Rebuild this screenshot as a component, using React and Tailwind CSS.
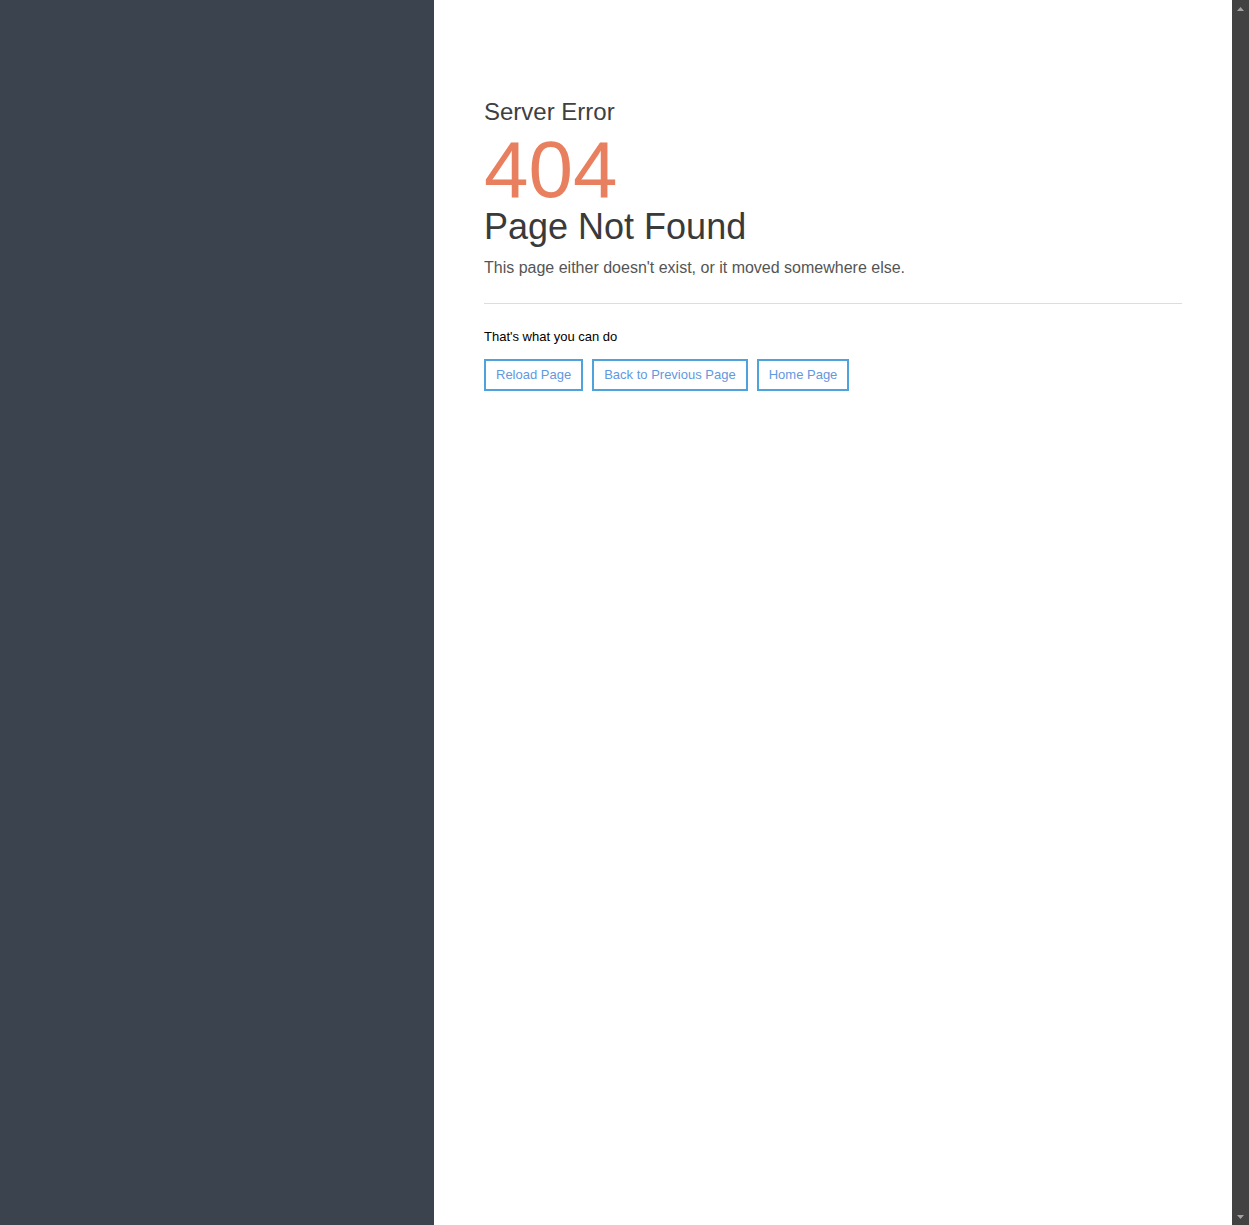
import React from 'react';

/* ── Action buttons ── */
const actions = [
  { key: 'reload', label: 'Reload Page' },
  { key: 'back', label: 'Back to Previous Page' },
  { key: 'home', label: 'Home Page' },
];

const Arrow = ({ down }) => (
  <svg width="17" height="17" viewBox="0 0 17 17" className="block">
    <path d={down ? 'M5 7h7l-3.5 4z' : 'M5 11h7l-3.5-4z'} fill="#a3a3a3" />
  </svg>
);

const App = () => {
  return (
    <div className="flex h-[1225px] font-['Liberation_Sans',Arial,sans-serif]">
      {/* Side panel */}
      <aside className="w-[434px] shrink-0 bg-[#3b444e]" />

      {/* Error content */}
      <main className="flex-1 bg-white px-[50px] pt-[98px]">
        <h2 className="text-[24px] leading-[28px] text-[#404040]">Server Error</h2>
        <h1 className="mt-[6px] text-[80px] leading-[75px] text-[#e8805f]">404</h1>
        <h3 className="text-[36px] leading-[40px] text-[#3a3a3a]">Page Not Found</h3>
        <p className="mt-[11px] text-[16px] leading-[20px] text-[#555]">
          This page either doesn't exist, or it moved somewhere else.
        </p>

        <hr className="mt-[25px] border-0 border-t border-[#ddd]" />

        <p className="mt-[25px] text-[13px] leading-[16px] text-black">That's what you can do</p>
        <div className="mt-[14px] flex gap-[9px]">
          {actions.map((a) => (
            <button
              key={a.key}
              className="h-[32px] border-2 border-[#4fa3dc] bg-white px-[10px] text-[13px] text-[#5f99e0]"
            >
              {a.label}
            </button>
          ))}
        </div>
      </main>

      {/* Scrollbar */}
      <div className="flex w-[17px] shrink-0 flex-col justify-between bg-[#424242]">
        <Arrow />
        <Arrow down />
      </div>
    </div>
  );
};

export default App;
